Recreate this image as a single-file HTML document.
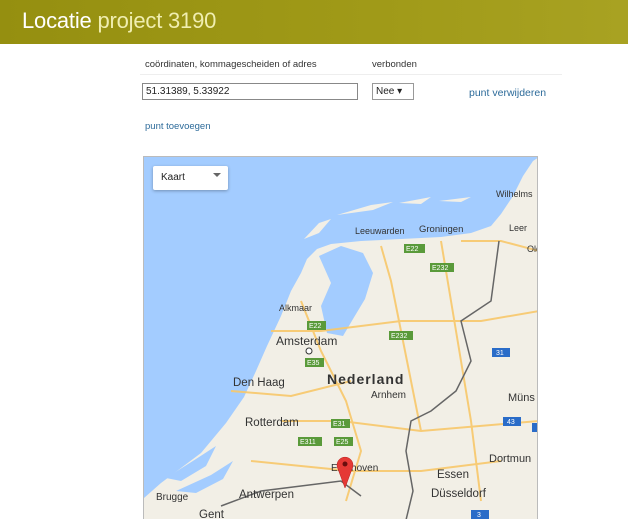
<!DOCTYPE html>
<html><head><meta charset="utf-8"><style>
body{margin:0;width:628px;height:519px;overflow:hidden;background:#fff;font-family:"Liberation Sans",sans-serif;position:relative}
.hdr{position:absolute;left:0;top:0;width:628px;height:44px;background:linear-gradient(90deg,#958f10,#a09a18 60%,#a8a222);}
.hdr h1{margin:0;position:absolute;left:22px;top:8px;font-size:22px;font-weight:normal;color:#fff;letter-spacing:-.2px}
.hdr h1 span{color:#f0eeb0}
.t{position:absolute;font-size:9.5px;color:#333}
.a{position:absolute;font-size:10.5px;color:#2d6b9a}
.inp{position:absolute;left:142px;top:83px;width:211px;height:15px;border:1px solid #888;font-size:10px;line-height:15px;padding-left:3px;color:#222}
.sel{position:absolute;left:372px;top:83px;width:37px;height:15px;border:1px solid #999;font-size:10px;line-height:15px;padding-left:3px;color:#222}
.map{position:absolute;left:143px;top:156px;width:395px;height:363px;overflow:hidden;border:1px solid #bbb;border-bottom:none;box-sizing:border-box}
.kb{position:absolute;left:153px;top:166px;width:75px;height:24px;background:#fff;box-shadow:0 1px 3px rgba(0,0,0,.3);border-radius:2px;font-size:10px;color:#222}
</style></head><body>
<div class="hdr"><h1>Locatie <span>project 3190</span></h1></div>
<div class="t" style="left:145px;top:59px">coördinaten, kommagescheiden of adres</div>
<div class="t" style="left:372px;top:59px">verbonden</div>
<div style="position:absolute;left:140px;top:74px;width:422px;height:1px;background:#eee"></div>
<div class="inp">51.31389, 5.33922</div>
<div class="sel">Nee ▾</div>
<div class="a" style="left:469px;top:87px">punt verwijderen</div>
<div class="a" style="left:145px;top:121px;font-size:9.5px">punt toevoegen</div>
<div class="map">
<svg width="395" height="363" viewBox="143 156 395 363" xmlns="http://www.w3.org/2000/svg" style="position:absolute;left:0;top:0">
<rect x="143" y="156" width="395" height="363" fill="#a3ccff"/>
<path d="M143 519 L143 497 L160 482 L200 452 L225 422 L243 396 L255 370 L266 345 L280 315 L290 290 L300 272 L306 258 L316 248 L330 243 L360 240 L400 238 L440 236 L470 232 L490 225 L500 213 L512 195 L522 175 L532 160 L538 156 L538 519 Z" fill="#f2efe6"/>
<path d="M318 255 L340 245 L362 252 L372 272 L364 298 L352 318 L342 335 L326 332 L320 305 L330 282 Z" fill="#a3ccff"/>
<g fill="#f2efe6"><path d="M303 238 L318 222 L330 218 L318 232 Z"/><path d="M336 214 L370 204 L392 201 L372 209 Z"/><path d="M398 202 L430 196 L420 203 Z"/><path d="M438 200 L470 196 L460 201 Z"/></g>
<path d="M165 477 L195 458 L215 445 L205 465 L180 480 Z" fill="#a3ccff"/>
<path d="M175 490 L210 474 L232 460 L222 478 L195 492 Z" fill="#a3ccff"/>
<g stroke="#f8c86a" stroke-width="2" fill="none" opacity=".9">
<path d="M300 300 L320 350 L345 400 L360 450 L345 500"/>
<path d="M270 330 L320 330 L400 320 L480 320 L538 310"/>
<path d="M280 420 L340 420 L420 430 L538 420"/>
<path d="M380 245 L390 280 L400 330 L410 380 L420 430"/>
<path d="M440 240 L450 300 L460 360 L470 420 L480 500"/>
<path d="M250 460 L300 465 L350 470 L420 470 L500 460"/>
<path d="M230 390 L290 395 L350 380"/>
<path d="M460 240 L500 240 L538 250"/>
</g>
<path d="M498 240 L490 300 L460 320 L470 360 L455 390 L430 410 L410 420 L405 450 L412 490 L405 519" stroke="#666" stroke-width="1.5" fill="none"/>
<path d="M220 505 L260 490 L300 485 L340 480 L360 495" stroke="#666" stroke-width="1.5" fill="none"/>
<g fill="#5a9a3a"><rect x="403" y="243" width="21" height="9"/><rect x="429" y="262" width="24" height="9"/><rect x="306" y="320" width="19" height="9"/><rect x="388" y="330" width="24" height="9"/><rect x="304" y="357" width="19" height="9"/><rect x="330" y="418" width="19" height="9"/><rect x="297" y="436" width="24" height="9"/><rect x="333" y="436" width="19" height="9"/></g>
<g fill="#2a6cc8"><rect x="491" y="347" width="18" height="9"/><rect x="502" y="416" width="18" height="9"/><rect x="531" y="422" width="10" height="9"/><rect x="470" y="509" width="18" height="9"/></g>
<g font-family="Liberation Sans" font-size="7" fill="#fff"><text x="405" y="250">E22</text><text x="431" y="269">E232</text><text x="308" y="327">E22</text><text x="390" y="337">E232</text><text x="306" y="364">E35</text><text x="332" y="425">E31</text><text x="299" y="443">E311</text><text x="335" y="443">E25</text><text x="495" y="354">31</text><text x="506" y="423">43</text><text x="476" y="516">3</text></g>
<g font-family="Liberation Sans" fill="#333" font-size="10.5">
<text x="354" y="233" font-size="9">Leeuwarden</text><text x="418" y="231" font-size="9.5">Groningen</text>
<text x="495" y="196" font-size="9">Wilhelms</text><text x="508" y="230" font-size="9">Leer</text><text x="526" y="251" font-size="9">Old</text>
<text x="278" y="310" font-size="9">Alkmaar</text><text x="275" y="344" font-size="12">Amsterdam</text>
<text x="232" y="385" font-size="11.5">Den Haag</text><text x="326" y="383" font-size="14" font-weight="bold" letter-spacing="1">Nederland</text>
<text x="370" y="397" font-size="10">Arnhem</text><text x="244" y="425" font-size="11.5">Rotterdam</text>
<text x="507" y="400" font-size="11">Müns</text><text x="488" y="461" font-size="11">Dortmun</text>
<text x="436" y="477" font-size="11.5">Essen</text><text x="430" y="496" font-size="11.5">Düsseldorf</text>
<text x="330" y="470" font-size="10">Eindhoven</text><text x="238" y="497" font-size="11.5">Antwerpen</text>
<text x="155" y="499" font-size="10">Brugge</text><text x="198" y="517" font-size="11.5">Gent</text>
</g>
<circle cx="308" cy="350" r="3" fill="#fff" stroke="#333"/>
<path d="M344 487 L337 468 A8 8 0 1 1 351 468 Z" fill="#e53935" stroke="#b71c1c" stroke-width=".5"/>
<circle cx="344" cy="463" r="2.5" fill="#6a0e0e"/>
</svg>
</div>
<div class="kb"><span style="position:absolute;left:8px;top:6px">Kaart</span><span style="position:absolute;right:7px;top:7px;border-left:4px solid transparent;border-right:4px solid transparent;border-top:4px solid #666;"></span></div>
</body></html>
